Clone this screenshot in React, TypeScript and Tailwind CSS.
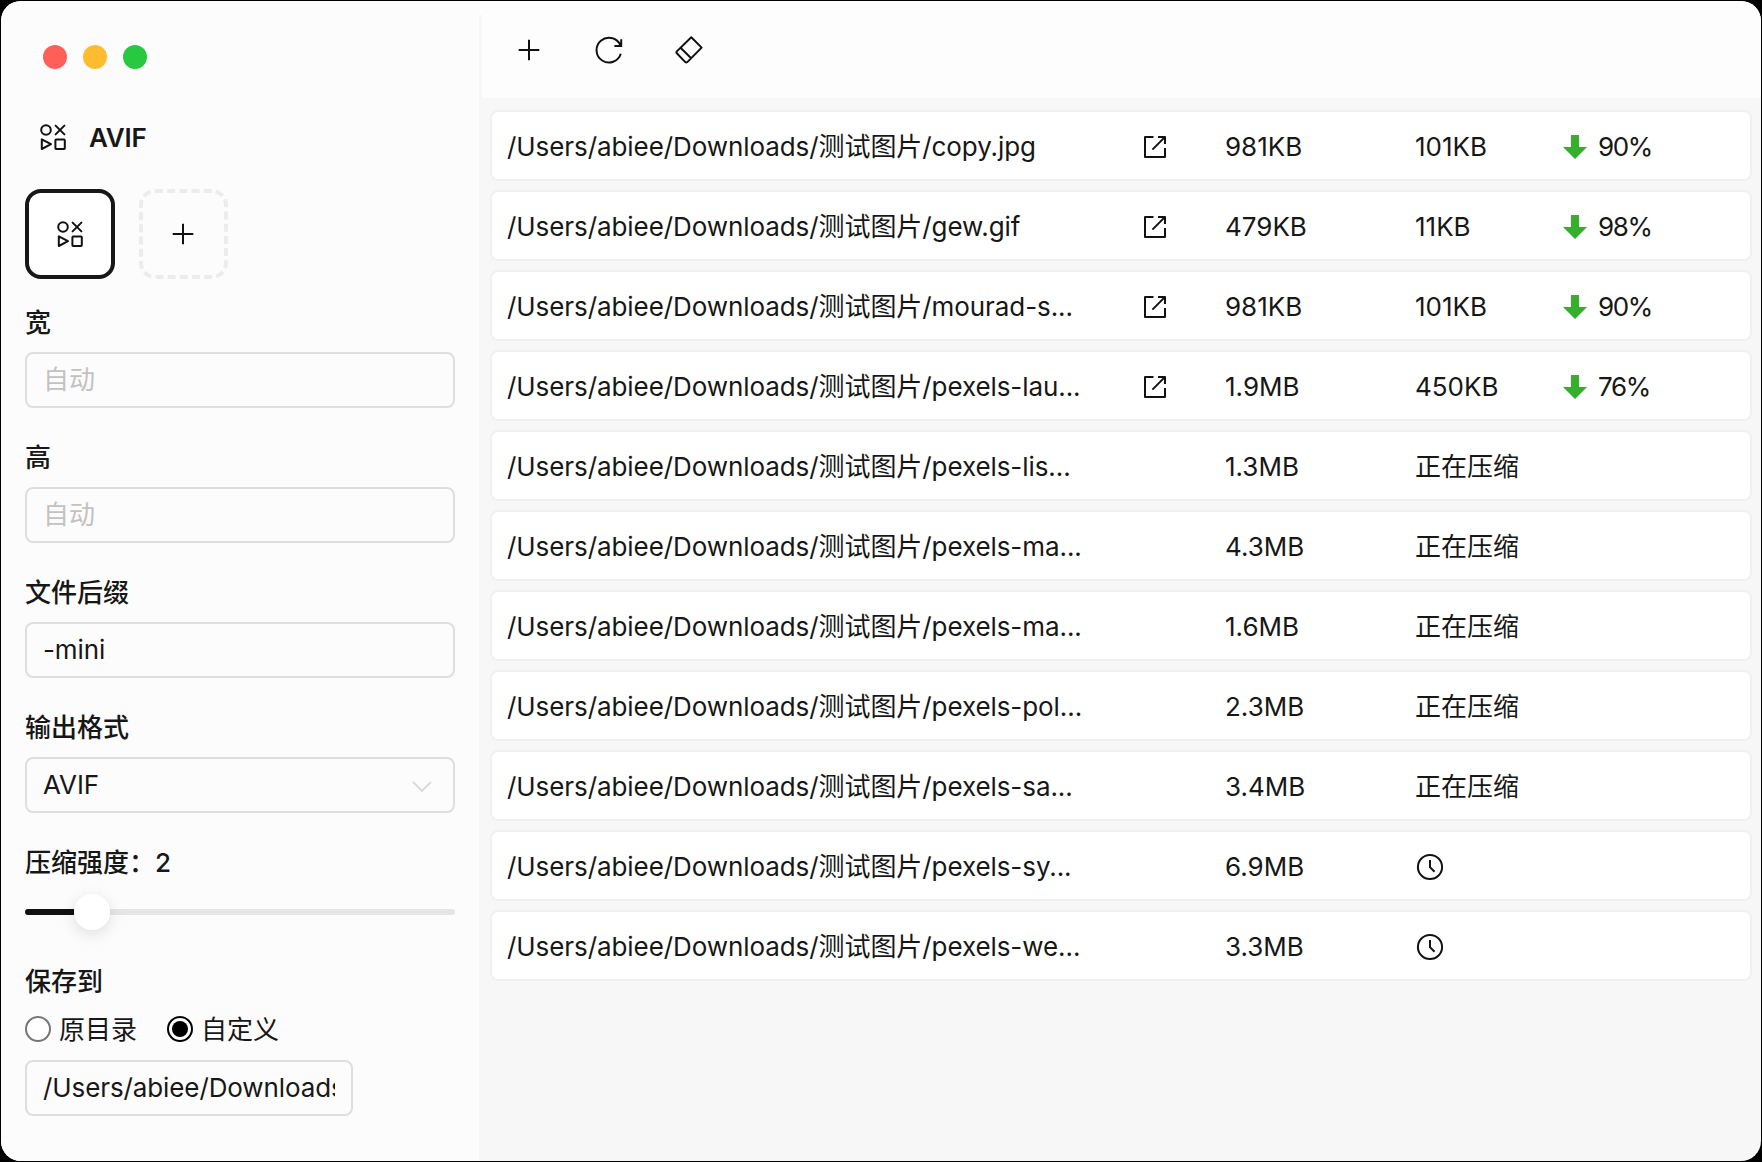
import React from "react";

const files = [
  ["copy.jpg", "981KB", "101KB", "90%"],
  ["gew.gif", "479KB", "11KB", "98%"],
  ["mourad-s...", "981KB", "101KB", "90%"],
  ["pexels-lau...", "1.9MB", "450KB", "76%"],
  ["pexels-lis...", "1.3MB", "正在压缩", ""],
  ["pexels-ma...", "4.3MB", "正在压缩", ""],
  ["pexels-ma...", "1.6MB", "正在压缩", ""],
  ["pexels-pol...", "2.3MB", "正在压缩", ""],
  ["pexels-sa...", "3.4MB", "正在压缩", ""],
  ["pexels-sy...", "6.9MB", "", ""],
  ["pexels-we...", "3.3MB", "", ""],
];

const Shapes = () => (
  <svg className="h-[26px] w-[26px] shrink-0" viewBox="0 0 26 26" fill="none" stroke="#111" strokeWidth="2" strokeLinejoin="round" strokeLinecap="round">
    <circle cx="6" cy="6" r="4.8" />
    <path d="M15.6 1.6 24.4 10.4M24.4 1.6 15.6 10.4M1.8 15.4V25L11 20.2Z" />
    <rect x="15.4" y="15.6" width="9.4" height="9.4" rx="0.8" />
  </svg>
);

const Plus = () => (
  <svg className="h-[22px] w-[22px] shrink-0" viewBox="0 0 22 22" fill="none" stroke="#111" strokeWidth="2">
    <path d="M11 .7V21.3M.7 11H21.3" />
  </svg>
);

const Refresh = () => (
  <svg className="h-7 w-7 shrink-0" viewBox="0 0 28 28" fill="none" stroke="#111" strokeWidth="2">
    <path d="M25.8 17.8A12.4 12.4 0 1 1 25.2 8.9M26.2 3.2V9.9H19.4" />
  </svg>
);

const Eraser = () => (
  <svg className="h-7 w-7 shrink-0" viewBox="0 0 28 28" fill="none" stroke="#111" strokeWidth="2" strokeLinejoin="round">
    <path d="M16.3 1.3 26.6 11.6 12.3 26.1Q11.3 27 10.3 26.1L1.8 17.3Q1 16.3 1.8 15.4ZM5.8 12 16.2 22.2" />
  </svg>
);

const Open = () => (
  <svg className="h-[22px] w-[22px]" viewBox="0 0 22 22" fill="none" stroke="#111" strokeWidth="2" strokeLinejoin="round">
    <path d="M9.5 1H1V21H21V12M14 1H21V8M20.6 1.4 8.4 13.6" />
  </svg>
);

const Clock = () => (
  <svg className="ml-px h-7 w-7" viewBox="0 0 28 28" fill="none" stroke="#111" strokeWidth="2">
    <circle cx="14" cy="14" r="12.1" />
    <path d="M14 7V14.2L18.5 18.8" />
  </svg>
);

const Down = () => (
  <svg className="h-6 w-6" viewBox="0 0 24 24" fill="#36ad2b">
    <path d="M8 0H16V12H24L12 24 0 12H8Z" />
  </svg>
);

const Label = ({ children }: { children: React.ReactNode }) => (
  <div className="mb-[9px] h-[41px] pt-px text-[26px] leading-10 font-medium">{children}</div>
);

const Field = ({ label, children }: { label: string; children: React.ReactNode }) => (
  <div className="mb-[29px]">
    <Label>{label}</Label>
    <div className="flex h-14 items-center justify-between rounded-lg border-2 border-[#dedede] px-4 pb-px tracking-[-0.1px]">{children}</div>
  </div>
);

export default function App() {
  return (
    <div className="h-[1162px] w-[1762px] overflow-hidden bg-black p-px font-['Inter','Noto_Sans_CJK_SC',sans-serif] text-[26px] leading-10 text-[#171717]">
      <div className="flex h-full overflow-hidden rounded-[20px] bg-[#f7f7f7]">
        <aside className="w-[478px] shrink-0 bg-[#fcfcfc] pl-6">
          <div className="flex gap-4 pt-11 pl-[18px]">
            <i className="h-6 w-6 rounded-full bg-[#fe5f58]" />
            <i className="h-6 w-6 rounded-full bg-[#febc2e]" />
            <i className="h-6 w-6 rounded-full bg-[#28c840]" />
          </div>
          <div className="mt-12 flex h-10 items-center gap-[23px] pl-[15px]">
            <Shapes />
            <span className="pt-0.5 font-semibold tracking-[-0.2px]">AVIF</span>
          </div>
          <div className="mt-8 flex gap-6">
            <div className="flex h-[90px] w-[90px] items-center justify-center rounded-2xl border-4 border-[#171717] bg-white">
              <Shapes />
            </div>
            <div className="flex h-[90px] w-[89px] items-center justify-center rounded-2xl border-4 border-dashed border-[#ececec] pr-px">
              <Plus />
            </div>
          </div>
          <div className="mt-[23px] w-[430px]">
            <Field label="宽"><span className="text-[#c2c2c2]">自动</span></Field>
            <Field label="高"><span className="text-[#c2c2c2]">自动</span></Field>
            <Field label="文件后缀">-mini</Field>
            <Field label="输出格式">
              AVIF
              <svg className="mt-1 mr-[5px] h-3 w-5" viewBox="0 0 20 12" fill="none" stroke="#d9d9d9" strokeWidth="1.8"><path d="M1 1 10 10 19 1" /></svg>
            </Field>
            <Label>压缩强度：2</Label>
            <div className="mt-[11px] flex h-9 items-center">
              <div className="h-1.5 w-[49px] rounded-l-full bg-[#111]" />
              <div className="z-10 h-9 w-9 rounded-full bg-white shadow-[0_4px_16px_rgba(0,0,0,0.12)]" />
              <div className="h-1.5 flex-1 rounded-r-full bg-[#e5e5e5]" />
            </div>
            <div className="mt-8 h-10 font-medium">保存到</div>
            <div className="mt-[7px] flex h-10 items-center">
              <i className="h-[26px] w-[26px] rounded-full border-2 border-[#767676] bg-white" />
              <span className="ml-2 pt-0.5">原目录</span>
              <i className="ml-[30px] flex h-[26px] w-[26px] items-center justify-center rounded-full border-2 border-black bg-white">
                <i className="h-4 w-4 rounded-full bg-black" />
              </i>
              <span className="ml-2 pt-0.5">自定义</span>
            </div>
            <div className="mt-[11px] h-14 w-[328px] rounded-lg border-2 border-[#dedede] px-4">
              <div className="overflow-hidden leading-[52px] tracking-[-0.1px] whitespace-nowrap">/Users/abiee/Downloads</div>
            </div>
          </div>
        </aside>
        <main className="flex min-w-0 flex-1 flex-col">
          <div className="h-[14px] shrink-0 bg-[#fdfdfd]" />
          <div className="ml-[3px] flex h-[83px] shrink-0 items-center bg-[#fdfdfd] pb-[14px] pl-9">
            <Plus />
            <span className="ml-[55px]"><Refresh /></span>
            <span className="ml-[52px]"><Eraser /></span>
          </div>
          <div className="flex flex-col gap-[9px] pt-3 pr-[9px] pl-[11px]">
            {files.map(([name, size, result, ratio], i) => (
              <div key={i} className="flex h-[71px] items-center rounded-lg border-2 border-[#f0f0f0] bg-white pt-[3px] pl-[15px]">
                <div className="w-[637px] tracking-[-0.075px] whitespace-nowrap">/Users/abiee/Downloads/测试图片/{name}</div>
                <div className="w-[81px]">{ratio && <Open />}</div>
                <div className="w-[190px]">{size}</div>
                <div className="w-[148px]">{result || <Clock />}</div>
                {ratio && <div className="flex items-center gap-[11px] tracking-[-1.4px]"><Down />{ratio}</div>}
              </div>
            ))}
          </div>
        </main>
      </div>
    </div>
  );
}
